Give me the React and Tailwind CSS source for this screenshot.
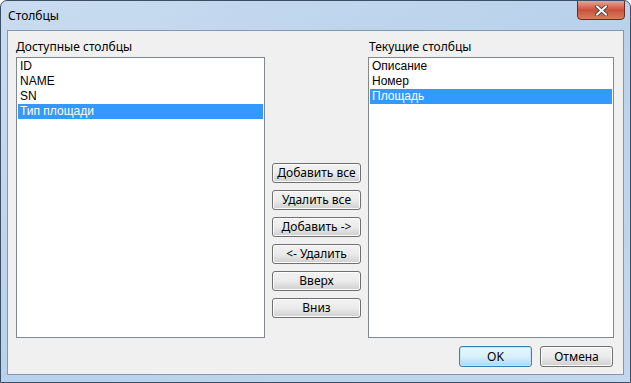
const leftItems = ["ID", "NAME", "SN", "Тип площади"];
const rightItems = ["Описание", "Номер", "Площадь"];
const midButtons = ["Добавить все", "Удалить все", "Добавить ->", "<- Удалить", "Вверх", "Вниз"];

const ListBox = ({ items, selected, className = "" }) => (
  <div className={`h-[281px] border border-[#828790] bg-white p-[1px] ${className}`}>
    {items.map((it, i) => (
      <div
        key={it}
        className={`h-[15px] overflow-hidden pl-[2px] font-['Liberation_Sans',sans-serif] text-[12px] leading-[15px] ${
          i === selected ? "bg-[#3399ff] text-white" : "text-black"
        }`}
      >
        {it}
      </div>
    ))}
  </div>
);

const WinButton = ({ children, className = "", primary = false }) => (
  <button
    className={`flex items-center justify-center rounded-[3px] border text-[12px] leading-none text-black ${
      primary
        ? "border-[#3c7fb1] bg-gradient-to-b from-[#eaf6fd] via-[#d9f0fc] to-[#a7d9f5] shadow-[inset_0_0_0_1px_#c4e5f6]"
        : "border-[#707070] bg-gradient-to-b from-[#f2f2f2] via-[#ebebeb] to-[#cfcfcf] shadow-[inset_0_0_0_1px_#fcfcfc]"
    } ${className}`}
  >
    {children}
  </button>
);

export default function App() {
  return (
    <div
      className="flex h-[383px] w-[631px] flex-col overflow-hidden rounded-t-[7px] border border-[#3d4f66] bg-gradient-to-br from-[#c9dcf0] via-[#b9d1eb] to-[#c3d8ee]"
      style={{ fontFamily: '"Noto Sans", "Open Sans", sans-serif' }}
    >
      {/* title bar */}
      <div className="relative flex h-[29px] items-center pl-[7px] text-[12px] text-black">
        Столбцы
        <div className="absolute right-[5px] top-[-1px] flex h-[20px] w-[48px] items-center justify-center rounded-b-[4px] border border-[#6d2a24] bg-gradient-to-b from-[#e5a494] via-[#c9503c] to-[#d87d5e]">
          <svg width="13" height="11" viewBox="0 0 13 11">
            <path d="M2 1.5 L11 9.5 M11 1.5 L2 9.5" stroke="#3a3a3a" strokeWidth="3.6" strokeLinecap="square" />
            <path d="M2 1.5 L11 9.5 M11 1.5 L2 9.5" stroke="#ffffff" strokeWidth="2" strokeLinecap="square" />
          </svg>
        </div>
      </div>

      {/* client area */}
      <div className="mx-[6px] flex h-[345px] flex-col border border-[#8497ae] bg-[#f0f0f0] pl-[8px] pr-[9px] pt-[6px]">
        <div className="flex">
          {/* left column */}
          <div className="flex w-[249px] flex-col">
            <div className="h-[20px] text-[12px] leading-[20px] text-black">Доступные столбцы</div>
            <ListBox items={leftItems} selected={3} />
          </div>

          {/* middle buttons */}
          <div className="ml-[7px] flex w-[89px] flex-col gap-[7px] pt-[126px]">
            {midButtons.map((b) => (
              <WinButton key={b} className="h-[20px] w-[89px]">
                {b}
              </WinButton>
            ))}
          </div>

          {/* right column */}
          <div className="ml-[7px] flex w-[246px] flex-col">
            <div className="h-[20px] pl-[1px] text-[12px] leading-[20px] text-black">Текущие столбцы</div>
            <ListBox items={rightItems} selected={2} />
          </div>
        </div>

        {/* bottom buttons */}
        <div className="mt-[8px] flex justify-end gap-[8px] pr-[1px]">
          <WinButton primary className="h-[21px] w-[73px]">
            OK
          </WinButton>
          <WinButton className="h-[21px] w-[73px]">Отмена</WinButton>
        </div>
      </div>
    </div>
  );
}
